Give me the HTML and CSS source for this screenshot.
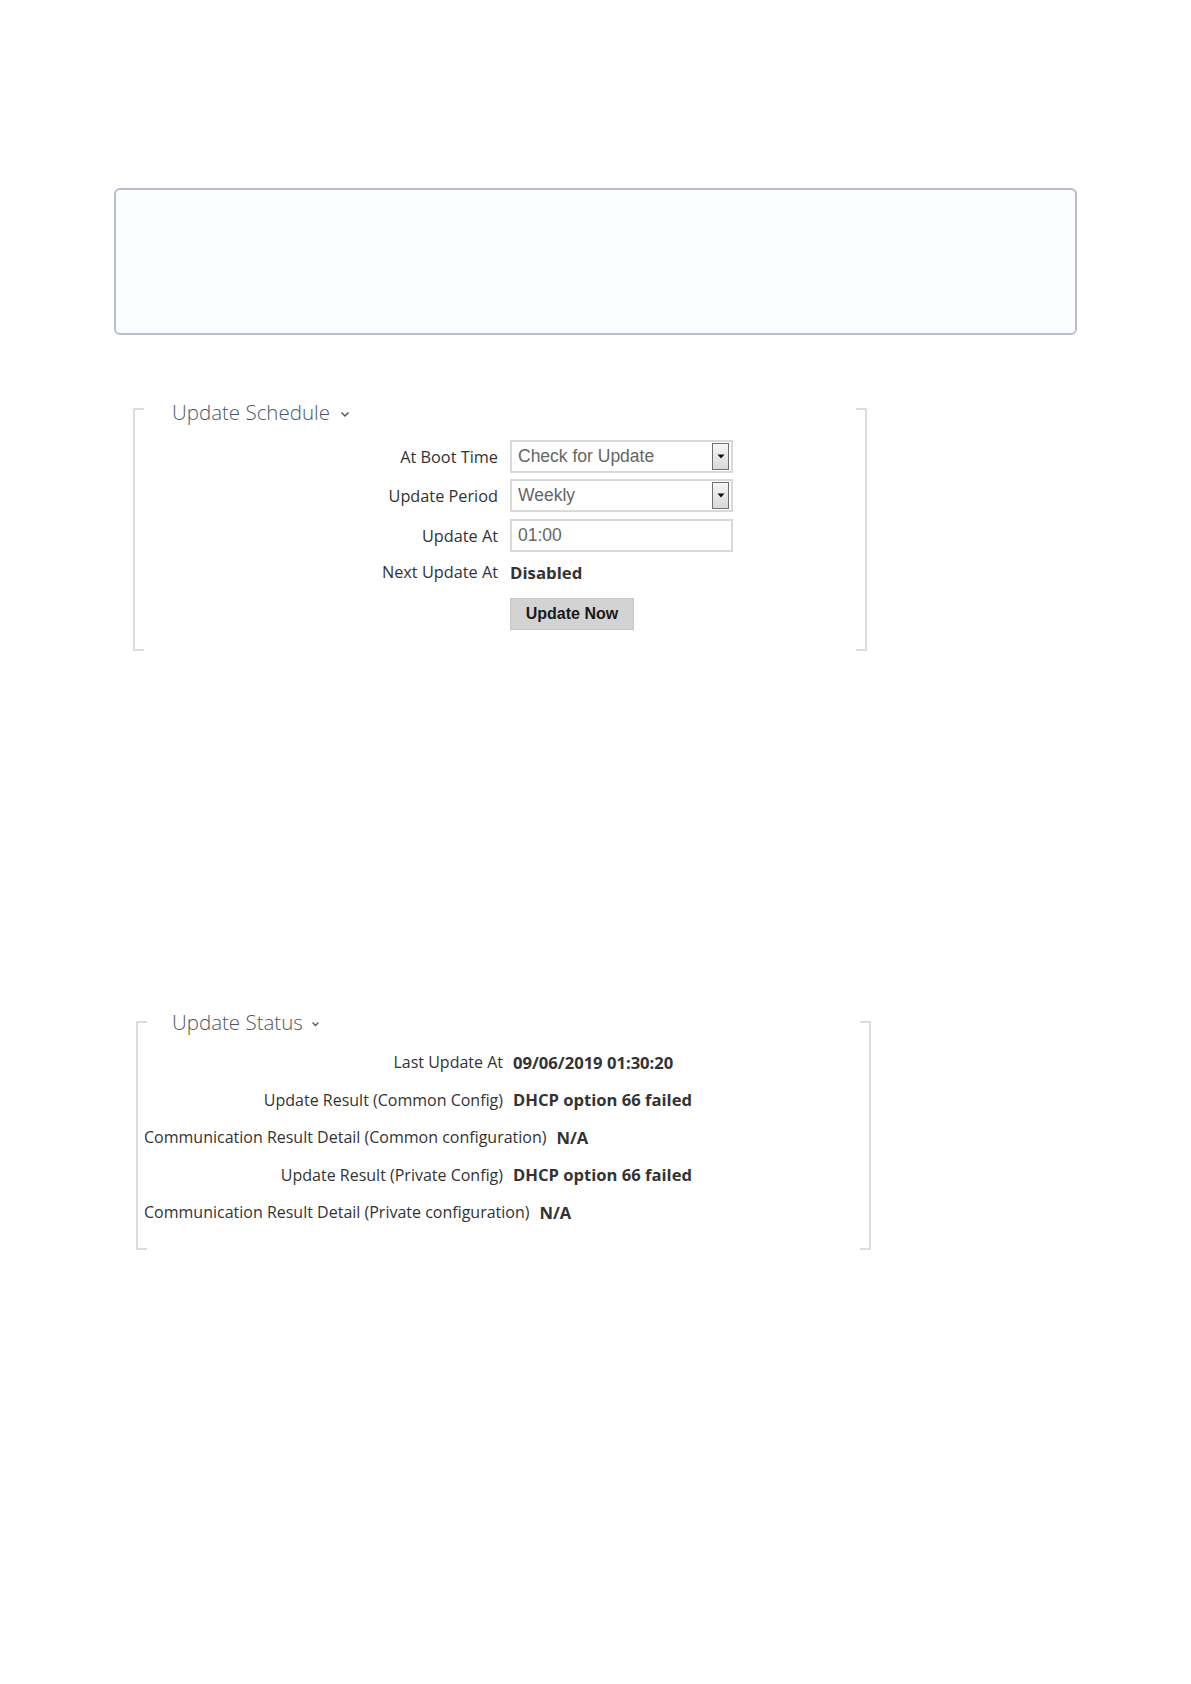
FILE: index.html
```html
<!DOCTYPE html>
<html lang="en">
<head>
<meta charset="utf-8">
<title>Update Schedule</title>
<link rel="stylesheet" href="styles.css">
</head>
<body>
<div class="info-box"></div>

<section class="panel panel-schedule">
  <h2 class="panel-title">Update Schedule
    <svg class="chev" width="10" height="7" viewBox="0 0 10 7"><polyline points="1.5,1.5 5,5 8.5,1.5" fill="none" stroke="#4e5a64" stroke-width="1.5"/></svg>
  </h2>
  <div class="form">
    <div class="frow r1">
      <span class="flabel">At Boot Time</span>
      <div class="select"><span class="sel-text">Check for Update</span><span class="arrow-btn"><svg width="8" height="5" viewBox="0 0 8 5"><polygon points="0.5,0.5 7.5,0.5 4,4.5" fill="#111"/></svg></span></div>
    </div>
    <div class="frow r2">
      <span class="flabel">Update Period</span>
      <div class="select"><span class="sel-text">Weekly</span><span class="arrow-btn"><svg width="8" height="5" viewBox="0 0 8 5"><polygon points="0.5,0.5 7.5,0.5 4,4.5" fill="#111"/></svg></span></div>
    </div>
    <div class="frow r3">
      <span class="flabel">Update At</span>
      <div class="input"><span class="sel-text">01:00</span></div>
    </div>
    <div class="frow r4">
      <span class="flabel">Next Update At</span>
      <span class="fvalue">Disabled</span>
    </div>
    <div class="frow r5">
      <span class="flabel"></span>
      <button class="btn" type="button">Update Now</button>
    </div>
  </div>
</section>

<section class="panel panel-status">
  <h2 class="panel-title">Update Status
    <svg class="chev chev-sm" width="9" height="6" viewBox="0 0 9 6"><polyline points="1.5,1.5 4.5,4.5 7.5,1.5" fill="none" stroke="#4e5a64" stroke-width="1.3"/></svg>
  </h2>
  <div class="status-list">
    <div class="srow"><span class="slabel">Last Update At</span><span class="svalue">09/06/2019 01:30:20</span></div>
    <div class="srow"><span class="slabel">Update Result (Common Config)</span><span class="svalue">DHCP option 66 failed</span></div>
    <div class="srow"><span class="slabel">Communication Result Detail (Common configuration)</span><span class="svalue">N/A</span></div>
    <div class="srow"><span class="slabel">Update Result (Private Config)</span><span class="svalue">DHCP option 66 failed</span></div>
    <div class="srow"><span class="slabel">Communication Result Detail (Private configuration)</span><span class="svalue">N/A</span></div>
  </div>
</section>
</body>
</html>
```
FILE: styles.css
```css
html, body {
  margin: 0;
  padding: 0;
  background: #ffffff;
}
body {
  font-family: "Open Sans", "Noto Sans", "DejaVu Sans", sans-serif;
  color: #333;
  padding-top: 188px;
}

.info-box {
  box-sizing: border-box;
  margin-left: 114px;
  width: 963px;
  height: 147px;
  border: 2px solid #b8bfca;
  border-radius: 6px;
  background: #fcfdfe;
}

.panel {
  position: relative;
  display: flow-root;
  box-sizing: border-box;
  border-left: 2px solid #dddddd;
  border-right: 2px solid #dddddd;
}
.panel::before,
.panel::after {
  content: "";
  position: absolute;
  left: -2px;
  right: -2px;
  height: 2px;
  background: linear-gradient(to right, #dddddd 11px, transparent 11px, transparent calc(100% - 11px), #dddddd calc(100% - 11px));
}
.panel::before { top: 0; }
.panel::after { bottom: 0; }

.panel-schedule {
  margin-top: 73px;
  margin-left: 133px;
  width: 734px;
  padding-bottom: 21px;
}
.panel-status {
  margin-top: 370px;
  margin-left: 136px;
  width: 735px;
  padding-bottom: 28px;
}

.panel-title {
  margin: 0;
  font-size: 20.5px;
  line-height: 28px;
  font-weight: 300;
  color: #4b5862;
  display: flex;
  align-items: center;
}
.panel-schedule .panel-title {
  margin-top: -10px;
  margin-bottom: 14px;
  padding-left: 37px;
}
.panel-status .panel-title {
  margin-top: -13px;
  margin-bottom: 16px;
  padding-left: 34px;
}
.chev {
  margin-left: 10px;
  margin-top: 4px;
}
.chev-sm {
  margin-left: 8px;
}

/* schedule form */
.form {
  display: flex;
  flex-direction: column;
}
.frow {
  display: flex;
  align-items: center;
  font-size: 16.3px;
}
.flabel {
  width: 363px;
  margin-right: 12px;
  text-align: right;
  color: #333;
  white-space: nowrap;
}
.r1 { height: 33px; margin-bottom: 6px; }
.r2 { height: 33px; margin-bottom: 7px; }
.r3 { height: 33px; margin-bottom: 10px; }
.r4 { height: 20px; margin-bottom: 16px; }
.r5 { height: 32px; }

.select,
.input {
  box-sizing: border-box;
  width: 223px;
  height: 33px;
  border: 2px solid #d9d9d9;
  background: #fff;
  display: flex;
  align-items: center;
  justify-content: space-between;
  padding-left: 6px;
  padding-right: 2px;
}
.sel-text {
  font-family: "Liberation Sans", Arial, sans-serif;
  font-size: 17.5px;
  color: #666;
}
.arrow-btn {
  box-sizing: border-box;
  width: 17px;
  height: 27px;
  border: 1px solid #6f6f6f;
  background: linear-gradient(#f6f6f6, #d9d9d9);
  display: flex;
  align-items: center;
  justify-content: center;
}
.fvalue {
  font-weight: 700;
  font-size: 16.8px;
  color: #333;
}
.btn {
  box-sizing: border-box;
  width: 124px;
  height: 32px;
  margin: 0;
  padding: 0;
  border: 1px solid #c6c6c6;
  background: #d3d3d3;
  font-family: "Liberation Sans", Arial, sans-serif;
  font-weight: 700;
  font-size: 16px;
  color: #1a1a1a;
}

/* status list */
.status-list {
  display: flex;
  flex-direction: column;
  gap: 17.5px;
}
.srow {
  display: flex;
  align-items: center;
  height: 20px;
  font-size: 16px;
  white-space: nowrap;
}
.slabel {
  min-width: 359px;
  margin-left: 6px;
  margin-right: 10px;
  text-align: right;
  color: #333;
}
.svalue {
  font-weight: 700;
  font-size: 16.6px;
  color: #333;
}
```
